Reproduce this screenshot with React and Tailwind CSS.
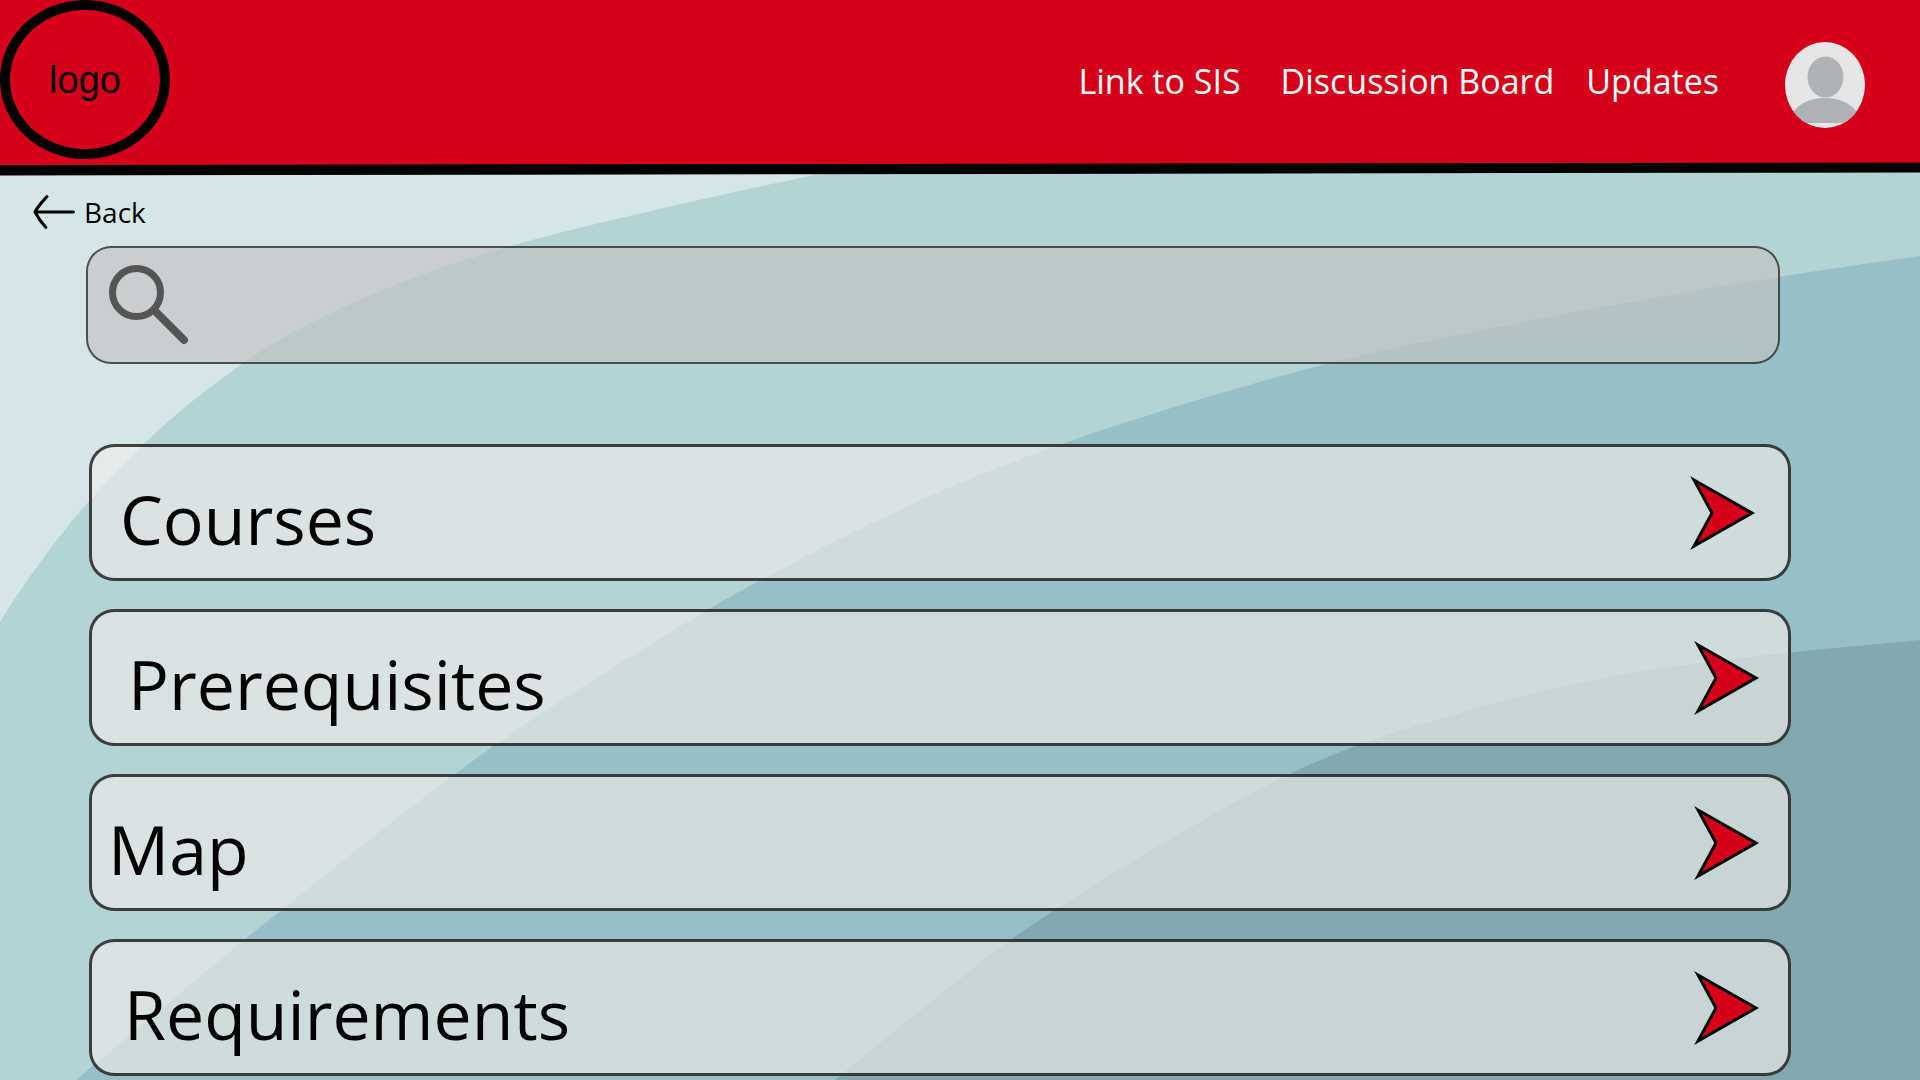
const ROWS = [
  { label: "Courses", pad: "pl-7 pr-8" },
  { label: "Prerequisites", pad: "pl-9 pr-7" },
  { label: "Map", pad: "pl-4 pr-7" },
  { label: "Requirements", pad: "pl-8 pr-7" },
];

// Smooth curve (Catmull-Rom converted to cubic Béziers) through a list of points.
function smooth(points) {
  let d = `M${points[0][0]} ${points[0][1]}`;
  for (let i = 0; i < points.length - 1; i++) {
    const p0 = points[Math.max(i - 1, 0)];
    const p1 = points[i];
    const p2 = points[i + 1];
    const p3 = points[Math.min(i + 2, points.length - 1)];
    d += `C${p1[0] + (p2[0] - p0[0]) / 6} ${p1[1] + (p2[1] - p0[1]) / 6} ${p2[0] - (p3[0] - p1[0]) / 6} ${p2[1] - (p3[1] - p1[1]) / 6} ${p2[0]} ${p2[1]}`;
  }
  return d;
}

const WAVES = [
  { fill: "#b4d3d5", points: [[-60, 730], [0, 622], [68, 526], [144, 444], [212, 386], [290, 334], [395, 285], [511, 246], [655, 210], [820, 174], [1000, 140]] },
  { fill: "#96c0c7", points: [[-90, 1220], [76, 1080], [264, 924], [474, 760], [654, 642], [800, 559], [960, 483], [1130, 421], [1335, 362], [1560, 315], [1779, 277], [1920, 256]] },
  { fill: "#82a9b0", points: [[760, 1145], [835, 1080], [930, 1003], [1035, 923], [1212, 815], [1330, 756], [1460, 713], [1599, 679], [1740, 658], [1920, 640]] },
];

function Backdrop() {
  return (
    <svg className="absolute inset-0 h-full w-full" viewBox="0 0 1920 1080" preserveAspectRatio="none" aria-hidden="true">
      <rect width="1920" height="1080" fill="#d5e6e9" />
      {WAVES.map((w) => (
        <path key={w.fill} d={`${smooth(w.points)}L1920 0V1300H0Z`} fill={w.fill} />
      ))}
    </svg>
  );
}

function Avatar() {
  return (
    <svg className="h-[86px] w-[80px]" viewBox="0 0 80 86" aria-hidden="true">
      <defs>
        <clipPath id="face">
          <ellipse cx="40" cy="43" rx="40" ry="43" />
        </clipPath>
      </defs>
      <ellipse cx="40" cy="43" rx="40" ry="43" fill="#e4e6e8" />
      <g clipPath="url(#face)" fill="#adb3b7">
        <ellipse cx="40.500" cy="35" rx="18" ry="20.500" />
        <path d="M5 81C5 66 21 56 40 56S75 66 75 81Z" />
      </g>
    </svg>
  );
}

function Arrow() {
  return (
    <svg className="h-[76px] w-[66px] shrink-0" viewBox="0 0 66 76" aria-hidden="true">
      <path d="M4 5L62 38L4 71L22 38Z" fill="#d7001a" stroke="#000" strokeWidth="3" strokeMiterlimit="10" />
    </svg>
  );
}

export default function App() {
  return (
    <div className="relative min-h-screen overflow-hidden font-['Open_Sans',sans-serif] text-black">
      <Backdrop />
      <div className="relative">
        <header className="flex h-[162px] items-start bg-[#d7001a]">
          <div className="flex h-[159px] w-[170px] shrink-0 items-center justify-center rounded-[50%] border-10 border-black font-['Liberation_Sans',sans-serif] text-[38px] leading-none">
            logo
          </div>
          <nav className="ml-auto flex h-full items-center pr-[55px] text-[34px] leading-[48px] text-white">
            <a href="#sis" className="mr-10">Link to SIS</a>
            <a href="#board" className="mr-8">Discussion Board</a>
            <a href="#updates" className="mr-[66px]">Updates</a>
            <button type="button" aria-label="Profile" className="mt-2">
              <Avatar />
            </button>
          </nav>
        </header>
        <svg className="block h-[14px] w-full" viewBox="0 0 1920 14" preserveAspectRatio="none" aria-hidden="true">
          <path d="M0 0H1920V1L0 4Z" fill="#d7001a" />
          <path d="M0 3L1920 0.500V10.500L0 13.500Z" fill="#000" />
        </svg>

        <main>
          <a href="#back" className="ml-8 mt-4 flex w-fit items-center gap-2 text-[28px] leading-10">
            <svg className="h-[36px] w-[44px]" viewBox="0 0 44 36" fill="none" stroke="#000" strokeWidth="3" strokeLinecap="round" strokeLinejoin="round" aria-hidden="true">
              <path d="M41.500 18H3M15 2.500C10 8 6 12 3 18C6 24 9 28 14 33.500" />
            </svg>
            Back
          </a>

          <label className="ml-[86px] mr-[140px] mt-3.5 flex h-[118px] items-center gap-6 rounded-[25px] border-2 border-black/62 bg-[#c2c2c2]/66 px-5">
            <svg className="h-[82px] w-[82px] shrink-0" viewBox="0 0 82 82" fill="none" stroke="#555" aria-hidden="true">
              <circle cx="28.500" cy="28.500" r="24" strokeWidth="7" />
              <path d="M47 47L76 76" strokeWidth="8" strokeLinecap="round" />
            </svg>
            <input type="search" aria-label="Search" className="h-full min-w-0 flex-1 bg-transparent text-[34px] outline-none" />
          </label>

          <div className="ml-[89px] mr-[129px] mt-20 flex flex-col gap-7">
            {ROWS.map((row) => (
              <button
                key={row.label}
                type="button"
                className={`flex h-[137px] items-center justify-between rounded-[25px] border-3 border-black/73 bg-[#efecea]/64 text-left ${row.pad}`}
              >
                <span className="pt-3 text-[68px] leading-[96px]">{row.label}</span>
                <Arrow />
              </button>
            ))}
          </div>
        </main>
      </div>
    </div>
  );
}
